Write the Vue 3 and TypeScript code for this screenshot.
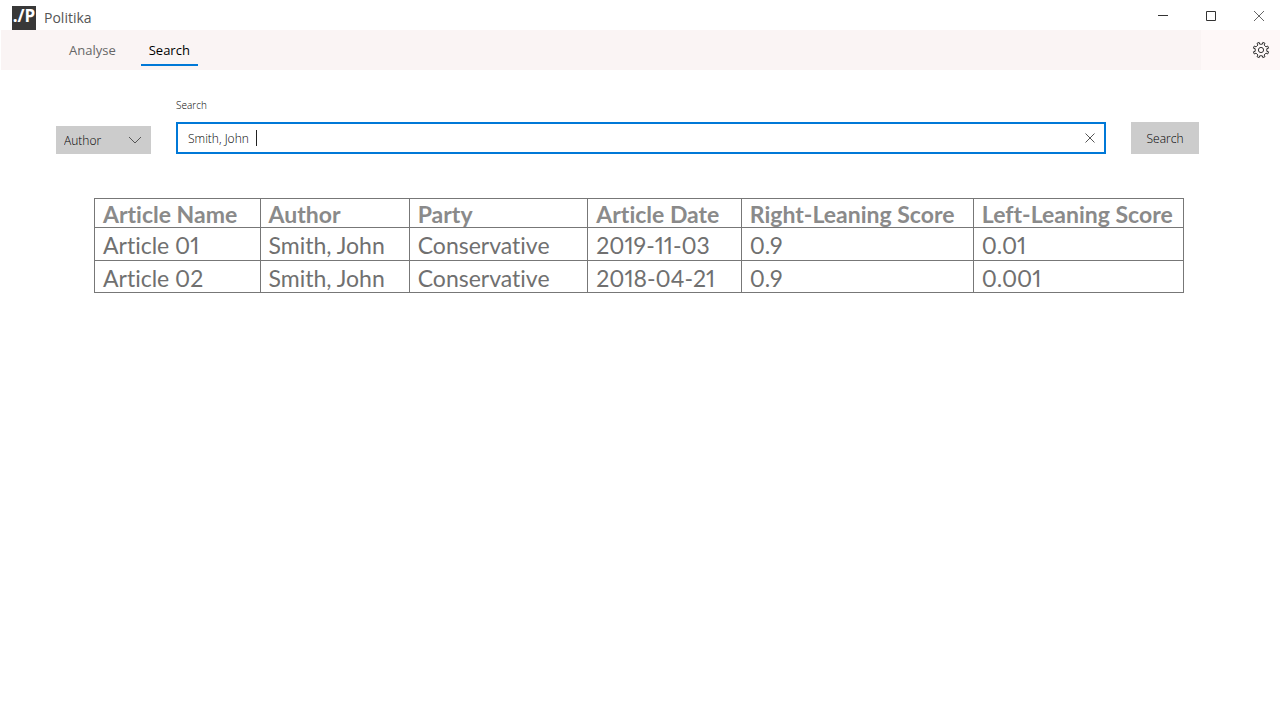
<script setup lang="ts">
import { ref } from 'vue'

interface Article {
  name: string
  author: string
  party: string
  date: string
  right: string
  left: string
}

const field = ref('Author')
const query = ref('Smith, John')
const editing = ref(true)

const headings = ['Article Name', 'Author', 'Party', 'Article Date', 'Right-Leaning Score', 'Left-Leaning Score']

const articles: Article[] = [
  { name: 'Article 01', author: 'Smith, John', party: 'Conservative', date: '2019-11-03', right: '0.9', left: '0.01' },
  { name: 'Article 02', author: 'Smith, John', party: 'Conservative', date: '2018-04-21', right: '0.9', left: '0.001' },
]
</script>

<template>
  <div class="window">
    <header class="titlebar">
      <div class="logo">./P</div>
      <h1 class="title">Politika</h1>
      <div class="controls">
        <button type="button" aria-label="Minimize">
          <svg width="12" height="12" viewBox="0 0 12 12"><path d="M1 5.5H11" /></svg>
        </button>
        <button type="button" aria-label="Maximize">
          <svg width="12" height="12" viewBox="0 0 12 12"><path d="M1.5 1.5H10.5V10.5H1.5Z" /></svg>
        </button>
        <button type="button" aria-label="Close">
          <svg class="cross" width="12" height="12" viewBox="0 0 12 12"><path d="M1 1L11 11M11 1L1 11" /></svg>
        </button>
      </div>
    </header>

    <nav class="navbar">
      <div class="tabs">
        <a href="#analyse">Analyse</a>
        <a href="#search" class="active" aria-current="page">Search</a>
      </div>
      <button type="button" class="settings" aria-label="Settings">
        <svg width="18" height="18" viewBox="0 0 18 18" stroke-linejoin="round">
          <path d="M7.7 3.2L7.2 1.4L5 2.3L5.9 4L4 5.9L2.3 5L1.4 7.2L3.2 7.7V10.3L1.4 10.8L2.3 13L4 12.1L5.9 14L5 15.7L7.2 16.6L7.7 14.8H10.3L10.8 16.6L13 15.7L12.1 14L14 12.1L15.7 13L16.6 10.8L14.8 10.3V7.7L16.6 7.2L15.7 5L14 5.9L12.1 4L13 2.3L10.8 1.4L10.3 3.2Z" />
          <circle cx="9" cy="9" r="2.6" />
        </svg>
      </button>
    </nav>

    <main>
      <form class="search" @submit.prevent>
        <div class="picker">
          <select v-model="field" aria-label="Search by">
            <option>Author</option>
            <option>Party</option>
          </select>
          <svg width="14" height="8" viewBox="0 0 14 8"><path d="M1 1L7 7L13 1" /></svg>
        </div>
        <div class="field">
          <label for="query">Search</label>
          <div class="box">
            <input id="query" v-model="query" type="text" autocomplete="off" />
            <span v-if="editing" class="caret"></span>
            <button type="button" class="clear" aria-label="Clear" @click="query = ''; editing = false">
              <svg width="10" height="10" viewBox="0 0 10 10"><path d="M.5 .5L9.5 9.5M9.5 .5L.5 9.5" /></svg>
            </button>
          </div>
        </div>
        <button type="submit" class="submit">Search</button>
      </form>

      <table>
        <colgroup>
          <col class="c-name" /><col class="c-author" /><col class="c-party" />
          <col class="c-date" /><col class="c-right" /><col class="c-left" />
        </colgroup>
        <thead>
          <tr><th v-for="h in headings" :key="h" scope="col">{{ h }}</th></tr>
        </thead>
        <tbody>
          <tr v-for="a in articles" :key="a.name">
            <td>{{ a.name }}</td>
            <td>{{ a.author }}</td>
            <td>{{ a.party }}</td>
            <td>{{ a.date }}</td>
            <td>{{ a.right }}</td>
            <td>{{ a.left }}</td>
          </tr>
        </tbody>
      </table>
    </main>
  </div>
</template>

<style>
body {
  background: #fff;
}
</style>

<style scoped>
.window {
  font-family: "Open Sans", "Noto Sans", sans-serif;
  font-size: 12px;
  font-weight: 350;
  color: #000;
}
button {
  padding: 0;
  border: 0;
  background: none;
  font: inherit;
  color: inherit;
}
svg {
  display: block;
  fill: none;
  stroke: #333;
}
.titlebar {
  display: flex;
  align-items: center;
  height: 30px;
  padding-left: 12px;
}
.logo {
  width: 24px;
  height: 24px;
  margin-top: 6px;
  background: #383838;
  color: #fff;
  font-size: 17px;
  font-weight: 700;
  line-height: 20px;
  text-align: center;
  white-space: nowrap;
}
.title {
  margin: 5px 0 0 8px;
  font-size: 14px;
  font-weight: 400;
  line-height: 20px;
  color: #555;
}
.controls {
  display: flex;
  margin: 2px -3px 0 auto;
}
.controls button {
  display: grid;
  place-items: center;
  width: 48px;
  height: 28px;
}
.cross {
  stroke: #666;
}
.navbar {
  display: flex;
  height: 40px;
  margin-left: 1px;
  background: #faf4f4;
}
.tabs {
  display: flex;
  flex: 1;
  gap: 17px;
  padding: 0 60px;
}
.tabs a {
  height: 34px;
  padding: 0 8px;
  border-bottom: 2px solid transparent;
  font-size: 13px;
  font-weight: 400;
  line-height: 40px;
  color: #666;
  text-decoration: none;
}
.tabs .active {
  border-color: #0078d7;
  color: #000;
}
.settings {
  display: flex;
  align-items: center;
  justify-content: flex-end;
  width: 79px;
  padding-right: 10px;
  background: #fef8f8;
}
.search {
  display: flex;
  align-items: flex-end;
  gap: 25px;
  padding: 28px 81px 0 56px;
}
.picker {
  position: relative;
  width: 95px;
}
.picker select {
  display: block;
  width: 100%;
  height: 28px;
  padding: 0 8px;
  border: 0;
  border-radius: 0;
  appearance: none;
  background: #ccc;
  font: inherit;
  color: #000;
}
.picker svg {
  position: absolute;
  top: 10px;
  right: 9px;
  stroke: #555;
  pointer-events: none;
}
.field {
  flex: 1;
}
.field label {
  display: block;
  margin-bottom: 10px;
  font-size: 10px;
  line-height: 14px;
}
.box {
  position: relative;
  display: flex;
  align-items: center;
  height: 28px;
  border: 2px solid #0078d7;
}
.box input {
  flex: 1;
  min-width: 0;
  height: 28px;
  padding: 0 10px;
  border: 0;
  outline: 0;
  background: none;
  font: inherit;
  color: #000;
}
.caret {
  position: absolute;
  top: 6px;
  left: 78px;
  width: 1px;
  height: 16px;
  background: #222;
}
.clear {
  display: grid;
  place-items: center;
  width: 28px;
  height: 28px;
}
.clear svg {
  stroke: #555;
}
.submit {
  width: 68px;
  height: 32px;
  background: #ccc;
}
table {
  width: calc(100% - 190px);
  margin: 44px 96px 0 94px;
  border-collapse: collapse;
  table-layout: fixed;
  font-family: Lato, sans-serif;
  font-size: 23px;
  font-weight: 400;
  font-variant-ligatures: none;
  font-variant-numeric: proportional-nums;
  line-height: 26px;
  color: #707070;
}
.c-name { width: 15.2%; }
.c-author { width: 13.7%; }
.c-party { width: 16.4%; }
.c-date { width: 14.1%; }
.c-right { width: 21.3%; }
.c-left { width: 19.3%; }
th,
td {
  height: 30px;
  padding: 2px 0 0 8px;
  border: 1px solid #777;
  text-align: left;
  white-space: nowrap;
}
tbody tr:last-child td {
  height: 29px;
}
th {
  height: 26px;
  font-weight: 700;
  color: #8a8a8a;
}
</style>
